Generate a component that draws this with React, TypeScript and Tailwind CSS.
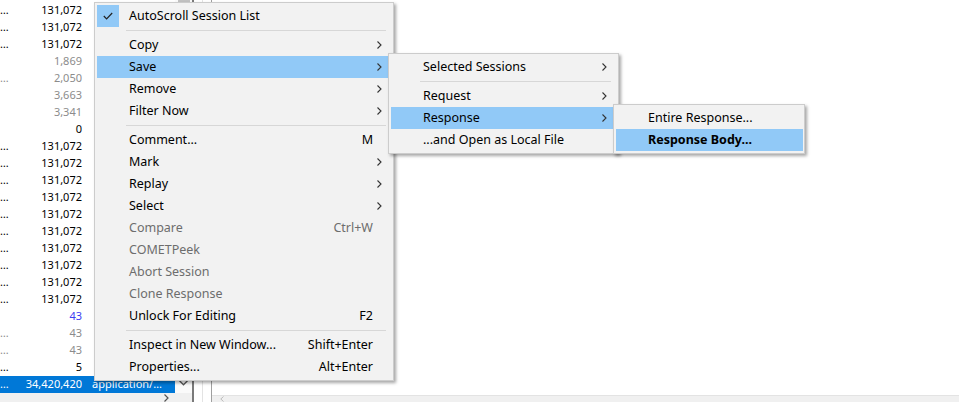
import clsx from "clsx";

type Row = { a: string; n: string; tone: "black" | "gray" | "blue" };

const rows: Row[] = [
  { a: "…", n: "131,072", tone: "black" },
  { a: "…", n: "131,072", tone: "black" },
  { a: "…", n: "131,072", tone: "black" },
  { a: "", n: "1,869", tone: "gray" },
  { a: "…", n: "2,050", tone: "gray" },
  { a: "", n: "3,663", tone: "gray" },
  { a: "", n: "3,341", tone: "gray" },
  { a: "", n: "0", tone: "black" },
  ...Array.from({ length: 10 }, () => ({ a: "…", n: "131,072", tone: "black" as const })),
  { a: "", n: "43", tone: "blue" },
  { a: "…", n: "43", tone: "gray" },
  { a: "…", n: "43", tone: "gray" },
  { a: "…", n: "5", tone: "black" },
];

type MenuEntry =
  | { sep: true }
  | {
      sep?: false;
      label: string;
      shortcut?: string;
      sub?: boolean;
      disabled?: boolean;
      active?: boolean;
      bold?: boolean;
      checked?: boolean;
    };

const mainMenu: MenuEntry[] = [
  { label: "AutoScroll Session List", checked: true },
  { sep: true },
  { label: "Copy", sub: true },
  { label: "Save", sub: true, active: true },
  { label: "Remove", sub: true },
  { label: "Filter Now", sub: true },
  { sep: true },
  { label: "Comment...", shortcut: "M" },
  { label: "Mark", sub: true },
  { label: "Replay", sub: true },
  { label: "Select", sub: true },
  { label: "Compare", shortcut: "Ctrl+W", disabled: true },
  { label: "COMETPeek", disabled: true },
  { label: "Abort Session", disabled: true },
  { label: "Clone Response", disabled: true },
  { label: "Unlock For Editing", shortcut: "F2" },
  { sep: true },
  { label: "Inspect in New Window...", shortcut: "Shift+Enter" },
  { label: "Properties...", shortcut: "Alt+Enter" },
];

const saveMenu: MenuEntry[] = [
  { label: "Selected Sessions", sub: true },
  { sep: true },
  { label: "Request", sub: true },
  { label: "Response", sub: true, active: true },
  { label: "...and Open as Local File" },
];

const responseMenu: MenuEntry[] = [
  { label: "Entire Response..." },
  { label: "Response Body...", bold: true, active: true },
];

const Chevron = () => (
  <svg width="5" height="8" viewBox="0 0 5 8" className="block">
    <path d="M0.5 0.5 L4 4 L0.5 7.5" fill="none" stroke="#333" strokeWidth="1.1" />
  </svg>
);

const Menu = ({ items, className }: { items: MenuEntry[]; className: string }) => (
  <div
    className={clsx(
      "absolute border border-[#cccccc] bg-[#f2f2f2] py-[2px] pl-[2px] text-[12.5px] shadow-[2px_2px_3px_rgba(0,0,0,0.35)]",
      className
    )}
  >
    {items.map((it, i) =>
      it.sep ? (
        <div key={i} className="h-[7px] flex items-center pl-[29px] pr-[2px]">
          <div className="h-px w-full bg-[#d7d7d7]" />
        </div>
      ) : (
        <div
          key={i}
          className={clsx(
            "h-[22px] flex items-center",
            it.active && "bg-[#91c9f7]",
            it.disabled ? "text-[#6d6d6d]" : "text-black",
            it.bold && "font-bold"
          )}
        >
          <div className={clsx("w-[22px] h-[22px] mr-[10px] flex items-center justify-center", it.checked && "bg-[#91c9f7]")}>
            {it.checked && (
              <svg width="10" height="8" viewBox="0 0 10 8">
                <path d="M0.8 4 L3.6 6.8 L9.2 1" fill="none" stroke="#222" strokeWidth="1.2" />
              </svg>
            )}
          </div>
          <span className="flex-1 whitespace-nowrap">{it.label}</span>
          {it.shortcut && <span className="whitespace-nowrap">{it.shortcut}</span>}
          <div className="w-[15px] pl-[4px] flex items-center">{it.sub && <Chevron />}</div>
        </div>
      )
    )}
  </div>
);

const toneClass = {
  black: "text-black",
  gray: "text-[#8c8c8c]",
  blue: "text-[#3d3df2]",
};

export default function App() {
  return (
    <div className="relative w-[959px] h-[402px] overflow-hidden bg-white flex font-['Noto_Sans',sans-serif] text-[12px] select-none">
      {/* session list */}
      <div className="w-[192px] flex flex-col">
        <div className="flex flex-1 min-h-0">
          <div className="w-[175px] pt-[2px] overflow-hidden text-[11px]">
            {rows.map((r, i) => (
              <div key={i} className={clsx("h-[17px] flex items-center whitespace-nowrap", toneClass[r.tone])}>
                <span className="w-[12px] overflow-hidden">{r.a}</span>
                <span className="w-[70px] text-right">{r.n}</span>
              </div>
            ))}
            <div className="h-[17px] flex items-center whitespace-nowrap bg-[#0078d7] text-white">
              <span className="w-[12px] overflow-hidden">…</span>
              <span className="w-[70px] text-right">34,420,420</span>
              <span className="pl-[10px]">application/…</span>
            </div>
          </div>
          <div className="w-[17px] bg-[#fafafa] flex flex-col justify-between items-center">
            <div className="w-[12px] h-[4px] bg-[#c2c2c2]" />
            <svg width="9" height="6" viewBox="0 0 9 6" className="mb-[7px]">
              <path d="M0.5 0.8 L4.5 4.8 L8.5 0.8" fill="none" stroke="#555" strokeWidth="1.3" />
            </svg>
          </div>
        </div>
        <div className="h-[9px] bg-[#f0f0f0] flex items-center pl-[164px]">
          <svg width="5" height="8" viewBox="0 0 5 8">
            <path d="M0.5 0.5 L4 4 L0.5 7.5" fill="none" stroke="#555" strokeWidth="1.2" />
          </svg>
        </div>
      </div>

      {/* splitter */}
      <div className="w-[2px] bg-[#7a7a7a]" />
      <div className="w-[18px] flex">
        <div className="w-[8px] bg-white" />
        <div className="w-px bg-[#e3e3e3]" />
        <div className="w-[9px] bg-white border-r border-[#a0a0a0]" />
      </div>

      {/* right pane */}
      <div className="flex-1 flex flex-col">
        <div className="flex-1 bg-white" />
        <div className="h-[7px] bg-[#f0f0f0] border-t border-[#e3e3e3] flex items-center pl-[8px]">
          <svg width="4" height="6" viewBox="0 0 4 6">
            <path d="M3.5 0.5 L0.8 3 L3.5 5.5" fill="none" stroke="#bbb" strokeWidth="1" />
          </svg>
        </div>
      </div>

      <Menu items={mainMenu} className="left-[94px] top-[2px] w-[300px] pr-[5px]" />
      <Menu items={saveMenu} className="left-[388px] top-[53px] w-[231px] pr-[5px]" />
      <Menu items={responseMenu} className="left-[613px] top-[104px] w-[192px] pr-[1px]" />
    </div>
  );
}
